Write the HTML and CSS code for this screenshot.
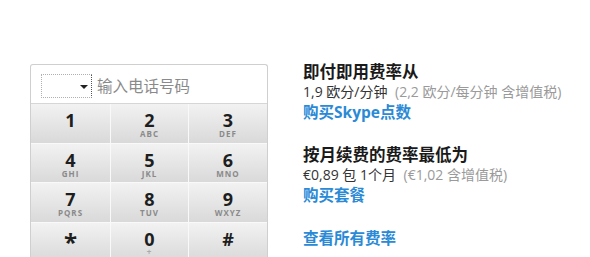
FILE: index.html
```html
<!DOCTYPE html>
<html lang="zh-CN">
<head>
    <meta charset="UTF-8">
    <title>Skype 拨号</title>
    <link rel="stylesheet" href="styles.css">
</head>
<body>

<div class="page">
    <!-- Dial pad -->
    <div class="dialpad">
        <div class="number-row">
            <div class="country-select"><span class="arrow"></span></div>
            <div class="number-input">输入电话号码</div>
        </div>
        <div class="keys">
            <div class="key"><span class="digit">1</span></div>
            <div class="key"><span class="digit">2</span><span class="letters">ABC</span></div>
            <div class="key"><span class="digit">3</span><span class="letters">DEF</span></div>
            <div class="key"><span class="digit">4</span><span class="letters">GHI</span></div>
            <div class="key"><span class="digit">5</span><span class="letters">JKL</span></div>
            <div class="key"><span class="digit">6</span><span class="letters">MNO</span></div>
            <div class="key"><span class="digit">7</span><span class="letters">PQRS</span></div>
            <div class="key"><span class="digit">8</span><span class="letters">TUV</span></div>
            <div class="key"><span class="digit">9</span><span class="letters">WXYZ</span></div>
            <div class="key"><span class="digit star">*</span></div>
            <div class="key"><span class="digit">0</span><span class="letters plus">+</span></div>
            <div class="key"><span class="digit">#</span></div>
        </div>
    </div>

    <!-- Rates -->
    <div class="rates">
        <div class="rate-block">
            <div class="rate-title">即付即用费率从</div>
            <div class="rate-price">1,9 欧分/分钟 <span class="vat">(2,2 欧分/每分钟 含增值税)</span></div>
            <a class="rate-link" href="#">购买Skype点数</a>
        </div>
        <div class="rate-block">
            <div class="rate-title">按月续费的费率最低为</div>
            <div class="rate-price">€0,89 包 1个月 <span class="vat">(€1,02 含增值税)</span></div>
            <a class="rate-link" href="#">购买套餐</a>
        </div>
        <a class="rate-link" href="#">查看所有费率</a>
    </div>
</div>

</body>
</html>
```

FILE: styles.css
```css
body {
    margin: 0;
    padding: 0;
    background-color: #fff;
    font-family: "Open Sans", "Noto Sans CJK SC", sans-serif;
    overflow: hidden;
}

.page {
    display: flex;
    align-items: flex-start;
    padding: 64px 0 0 30px;
}

.dialpad {
    width: 238px;
    border: 1px solid #cfcfcf;
    border-bottom: none;
    border-radius: 3px 3px 0 0;
    box-sizing: border-box;
    background-color: #fff;
}

.number-row {
    display: flex;
    align-items: center;
    height: 39px;
    padding-left: 10px;
    border-bottom: 1px solid #d6d6d6;
    box-sizing: border-box;
}

.country-select {
    position: relative;
    width: 51px;
    height: 24px;
    margin-top: 3px;
    border: 1px dotted #b0b0b0;
    border-right: 1px dotted #555;
    box-sizing: border-box;
}

.country-select .arrow {
    position: absolute;
    right: 3px;
    top: 10px;
    border-left: 4px solid transparent;
    border-right: 4px solid transparent;
    border-top: 4px solid #222;
}

.number-input {
    margin-left: 5px;
    margin-top: 2px;
    font-size: 15.5px;
    color: #8a8a8a;
}

.keys {
    display: grid;
    grid-template-columns: 79px 77px 78px;
    grid-auto-rows: 38.5px;
    gap: 1px;
    background-color: #f9f9f9;
}

.key {
    display: flex;
    flex-direction: column;
    align-items: center;
    padding-top: 7px;
    box-sizing: border-box;
    background: linear-gradient(#f2f2f2, #d9d9d9);
}

.digit {
    font-size: 18px;
    font-weight: bold;
    line-height: 18px;
    color: #1e1e1e;
}

.digit.star {
    font-size: 24px;
    line-height: 24px;
}

.letters {
    font-size: 8px;
    font-weight: bold;
    letter-spacing: 1px;
    line-height: 10px;
    color: #8a8a8a;
}

.letters.plus {
    margin-top: -1px;
    color: #aaa;
}

.rates {
    margin-left: 35px;
    margin-top: -2px;
    display: flex;
    flex-direction: column;
}

.rate-block {
    margin-bottom: 23px;
}

.rate-title {
    font-size: 16.5px;
    font-weight: bold;
    line-height: 20px;
    color: #1a1a1a;
}

.rate-price {
    font-size: 14px;
    line-height: 20px;
    color: #333;
}

.rate-price .vat {
    color: #9a9a9a;
    margin-left: 4px;
}

.rate-link {
    display: block;
    font-size: 15.5px;
    font-weight: bold;
    line-height: 20px;
    color: #2b8ad6;
    text-decoration: none;
}
```
